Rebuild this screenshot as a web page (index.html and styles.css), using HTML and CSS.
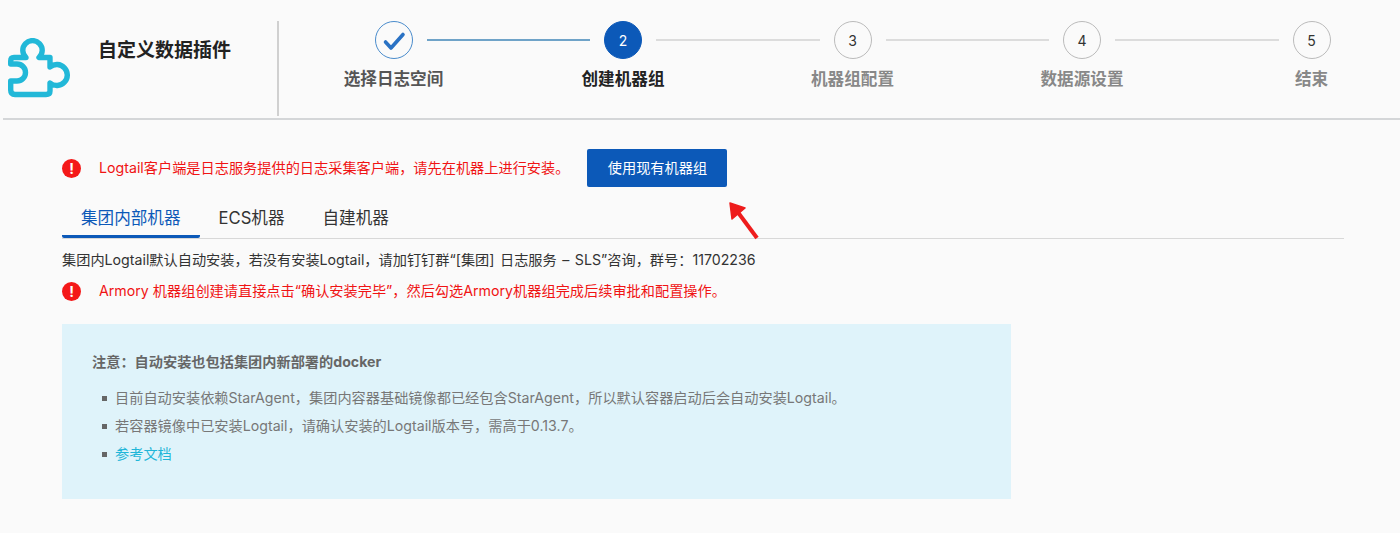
FILE: index.html
```html
<!DOCTYPE html>
<html lang="zh-CN">
  <head>
    <meta charset="UTF-8" />
    <meta name="viewport" content="width=device-width, initial-scale=1.0" />
    <title>自定义数据插件</title>
    <link rel="stylesheet" href="styles.css">
  </head>
  <body>
    <header class="wizard-header">
      <div class="brand">
        <svg class="brand-logo" viewBox="8 38 62 60" width="62" height="60">
          <path d="M26 57.5A9.7 9.7 0 1 1 39 57.5H50V67A10.5 10.5 0 1 1 50 83V91Q50 94.5 46 94.5H15Q10.7 94.5 10.7 90V81H17A8.5 8.5 0 0 0 17 64H10.7V61Q10.7 57.5 14 57.5Z" fill="none" stroke="#22b8d8" stroke-width="5.4" stroke-linejoin="round" />
        </svg>
        <div class="brand-title">自定义数据插件</div>
      </div>
      <div class="steps">
        <div class="step step-done">
          <div class="step-circle">
            <svg viewBox="0 0 24 24" width="24" height="24">
              <path d="M3.5 14L9 20L21 6.5" fill="none" stroke="#2a72c4" stroke-width="3.6" stroke-linecap="round" stroke-linejoin="round" />
            </svg>
          </div>
          <div class="step-label">选择日志空间</div>
        </div>
        <div class="step-line step-line-done"></div>
        <div class="step step-active">
          <div class="step-circle">2</div>
          <div class="step-label">创建机器组</div>
        </div>
        <div class="step-line"></div>
        <div class="step">
          <div class="step-circle">3</div>
          <div class="step-label">机器组配置</div>
        </div>
        <div class="step-line"></div>
        <div class="step">
          <div class="step-circle">4</div>
          <div class="step-label">数据源设置</div>
        </div>
        <div class="step-line"></div>
        <div class="step">
          <div class="step-circle">5</div>
          <div class="step-label">结束</div>
        </div>
      </div>
    </header>

    <main class="content">
      <div class="notice notice-top">
        <span class="notice-icon">!</span>
        <span class="notice-text">Logtail客户端是日志服务提供的日志采集客户端，请先在机器上进行安装。</span>
        <button class="primary-btn">使用现有机器组</button>
        <svg class="arrow" viewBox="0 0 40 44" width="40" height="44">
          <path d="M29 38L6 7" fill="none" stroke="#ee1c1c" stroke-width="4" />
          <path d="M2 3L17 8L4 19Z" fill="#ee1c1c" stroke="#ee1c1c" stroke-width="1.5" stroke-linejoin="round" />
        </svg>
      </div>

      <div class="tabs">
        <div class="tab tab-active">集团内部机器</div>
        <div class="tab">ECS机器</div>
        <div class="tab">自建机器</div>
      </div>

      <p class="intro">集团内Logtail默认自动安装，若没有安装Logtail，请加钉钉群“[集团] 日志服务 – SLS”咨询，群号：11702236</p>

      <div class="notice notice-second">
        <span class="notice-icon">!</span>
        <span class="notice-text">Armory 机器组创建请直接点击“确认安装完毕”，然后勾选Armory机器组完成后续审批和配置操作。</span>
      </div>

      <section class="info-box">
        <h4>注意：自动安装也包括集团内新部署的docker</h4>
        <ul>
          <li>目前自动安装依赖StarAgent，集团内容器基础镜像都已经包含StarAgent，所以默认容器启动后会自动安装Logtail。</li>
          <li>若容器镜像中已安装Logtail，请确认安装的Logtail版本号，需高于0.13.7。</li>
          <li><a href="#">参考文档</a></li>
        </ul>
      </section>
    </main>
  </body>
</html>
```

FILE: styles.css
```css
* {
  box-sizing: border-box;
  margin: 0;
  padding: 0;
}

body {
  font-family: Inter, "Noto Sans CJK SC", sans-serif;
  background: #fafafa;
  color: #333;
  font-size: 14.2px;
  overflow: hidden;
}

.wizard-header {
  display: flex;
  height: 120px;
  margin-left: 3px;
  border-bottom: 2px solid #d4d6d8;
}

.brand {
  display: flex;
  align-items: flex-start;
  width: 276px;
  height: 95px;
  margin-top: 21px;
  padding-left: 5px;
  border-right: 2px solid #d0d0d0;
}

.brand-logo {
  margin-top: 17px;
}

.brand-title {
  margin: 16px 0 0 28px;
  font-size: 19px;
  line-height: 27px;
  font-weight: bold;
  color: #222;
}

.steps {
  display: flex;
  align-items: flex-start;
  margin: 21px 0 0 95.5px;
}

.step {
  display: flex;
  flex-direction: column;
  align-items: center;
  width: 38px;
}

.step-circle {
  display: flex;
  align-items: center;
  justify-content: center;
  width: 38px;
  height: 38px;
  border: 1.5px solid #bbb;
  border-radius: 50%;
  font-size: 14px;
  color: #333;
}

.step-label {
  margin-top: 8px;
  font-size: 16.6px;
  line-height: 24px;
  font-weight: bold;
  color: #888;
  white-space: nowrap;
}

.step-done .step-circle {
  border-color: #4a8ccc;
}

.step-done .step-label {
  color: #555;
}

.step-active .step-circle {
  background: #0c59b8;
  border-color: #0c59b8;
  color: #fff;
}

.step-active .step-label {
  color: #222;
}

.step-line {
  width: 163.5px;
  height: 2px;
  margin: 18px 14px 0;
  background: #dcdcdc;
}

.step-line-done {
  background: #6fa3c8;
}

.content {
  padding: 29px 56px 0 62px;
}

.notice {
  display: flex;
  align-items: center;
  color: #f01414;
}

.notice-top {
  position: relative;
  height: 38px;
}

.notice-text {
  padding-bottom: 2px;
}

.notice-icon {
  display: flex;
  align-items: center;
  justify-content: center;
  flex: none;
  width: 19px;
  height: 19px;
  margin-right: 18px;
  border-radius: 50%;
  background: #f41818;
  color: #fff;
  font-size: 14px;
  font-weight: bold;
}

.primary-btn {
  width: 140px;
  height: 38px;
  margin-left: 18px;
  padding-bottom: 2px;
  border: none;
  border-radius: 2px;
  background: #0c59b8;
  color: #fff;
  font-family: inherit;
  font-size: 14.2px;
}

.arrow {
  position: absolute;
  left: 666px;
  top: 51px;
}

.tabs {
  display: flex;
  margin-top: 14px;
  border-bottom: 1px solid #d8d8d8;
}

.tab {
  padding: 0 19px;
  height: 37px;
  line-height: 35px;
  font-size: 16.6px;
  color: #333;
}

.tab-active {
  color: #0c59b8;
  border-bottom: 3px solid #0c59b8;
  border-radius: 2px;
  margin-bottom: -1px;
}

.intro {
  margin-top: 11px;
  line-height: 20px;
  word-spacing: 1.5px;
}

.notice-second {
  margin-top: 11px;
  height: 20px;
}

.info-box {
  width: 949px;
  height: 175px;
  margin-top: 23px;
  padding: 28px 30px;
  background: #dff3fa;
  color: #777;
}

.info-box h4 {
  font-size: 14.2px;
  line-height: 20px;
  color: #666;
}

.info-box ul {
  margin-top: 12px;
  list-style: none;
}

.info-box li {
  position: relative;
  height: 28px;
  line-height: 28px;
  padding-left: 23px;
}

.info-box li::before {
  content: "";
  position: absolute;
  left: 10px;
  top: 12px;
  width: 5px;
  height: 5px;
  background: #666;
}

.info-box a {
  color: #1fb6d8;
  text-decoration: none;
}
```
